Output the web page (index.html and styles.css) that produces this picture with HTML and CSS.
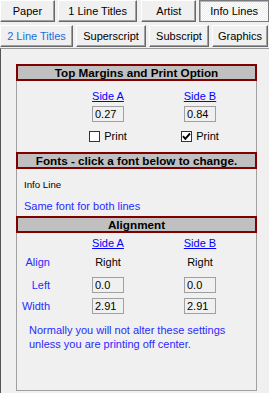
FILE: index.html
```html
<!DOCTYPE html>
<html lang="en">
<head>
  <meta charset="UTF-8" />
  <title>Info Lines</title>
  <link rel="stylesheet" href="styles.css">
</head>

<body>
  <!-- Pestañas -->
  <div class="tab-row">
    <button class="tab tab-paper">Paper</button>
    <button class="tab tab-one">1 Line Titles</button>
    <button class="tab tab-artist">Artist</button>
    <button class="tab tab-info active">Info Lines</button>
  </div>
  <div class="tab-row second">
    <button class="tab tab-two current">2 Line Titles</button>
    <button class="tab tab-super">Superscript</button>
    <button class="tab tab-sub">Subscript</button>
    <button class="tab tab-graphics">Graphics</button>
  </div>

  <!-- Contenido de la pestaña -->
  <div class="tab-page">
    <div class="panel">

      <!-- Margenes -->
      <div class="section-head">Top Margins and Print Option</div>
      <div class="row row-sides">
        <span></span>
        <a href="#" class="side-link">Side A</a>
        <a href="#" class="side-link">Side B</a>
      </div>
      <div class="row row-margins">
        <span></span>
        <input type="text" class="field" value="0.27">
        <input type="text" class="field" value="0.84">
      </div>
      <div class="row row-print">
        <span></span>
        <label class="print"><span class="check"></span>Print</label>
        <label class="print">
          <span class="check">
            <svg width="9" height="9" viewBox="0 0 9 9"><path d="M1 4.2 L3.3 6.8 L8 1.5" fill="none" stroke="#000" stroke-width="1.9"/></svg>
          </span>Print
        </label>
      </div>

      <!-- Fuentes -->
      <div class="section-head fonts-head">Fonts - click a font below to change.</div>
      <div class="font-name">Info Line</div>
      <div class="font-same">Same font for both lines</div>

      <!-- Alineación -->
      <div class="section-head align-head">Alignment</div>
      <div class="row row-sides2">
        <span></span>
        <a href="#" class="side-link">Side A</a>
        <a href="#" class="side-link">Side B</a>
      </div>
      <div class="row row-align">
        <span class="row-label">Align</span>
        <span>Right</span>
        <span>Right</span>
      </div>
      <div class="row row-left">
        <span class="row-label">Left</span>
        <input type="text" class="field" value="0.0">
        <input type="text" class="field" value="0.0">
      </div>
      <div class="row row-width">
        <span class="row-label">Width</span>
        <input type="text" class="field" value="2.91">
        <input type="text" class="field" value="2.91">
      </div>

      <p class="note">Normally you will not alter these settings<br>unless you are printing off center.</p>
    </div>
  </div>
</body>
</html>
```

FILE: styles.css
```css
body {
  margin: 0;
  padding: 0;
  font-family: 'Liberation Sans', Arial, sans-serif;
  font-size: 11px;
  background-color: #f0f0f0;
  color: #000000;
  width: 269px;
  height: 393px;
  overflow: hidden;
}

/* Pestañas */
.tab-row {
  display: flex;
  gap: 3px;
}

.tab-row.second {
  margin-top: 3px;
}

.tab {
  height: 22px;
  padding: 0;
  font-family: inherit;
  font-size: 11px;
  color: #000000;
  background-color: #f0f0f0;
  border: 1px solid;
  border-color: #ffffff #696969 #696969 #ffffff;
  box-shadow: inset -1px -1px 0 #a0a0a0;
}

.tab-paper { width: 55px; }
.tab-one { width: 80px; }
.tab-artist { width: 55px; margin-left: 1px; }
.tab-info { width: 70px; }

.tab-two { width: 73px; }
.tab-super { width: 70px; }
.tab-sub { width: 60px; }
.tab-graphics { width: 56px; }

.tab.active {
  border-color: #7a7a7a;
  box-shadow: inset 1px 1px 0 #b4b4b4;
  background: repeating-conic-gradient(#ffffff 0 25%, #ececec 0 50%) 0 0 / 2px 2px;
}

.tab.current {
  color: #1a6be0;
}

.tab-page {
  margin-top: 1px;
  border-top: 1px solid #9a9a9a;
  border-left: 1px solid #555555;
  padding: 15px 0 0 15px;
  height: 329px;
}

/* Panel */
.panel {
  width: 241px;
  box-sizing: border-box;
  border: 1px solid #a0a0a0;
  border-top: none;
  padding-bottom: 39px;
}

.section-head {
  margin: 0 -1px;
  height: 17px;
  box-sizing: border-box;
  border: 2px solid #800000;
  background-color: #c0c0c0;
  line-height: 13px;
  text-align: center;
  font-weight: bold;
  font-size: 11.7px;
}

.row {
  display: grid;
  grid-template-columns: 35px 72px 72px;
  column-gap: 20px;
  align-items: center;
  justify-items: center;
  line-height: 14px;
}

.row-label {
  justify-self: end;
  padding-right: 2px;
  color: #2a2aff;
}

.side-link {
  color: #0000ff;
  text-decoration: underline;
}

.field {
  width: 32px;
  height: 16px;
  box-sizing: border-box;
  margin: 0;
  padding: 0 2px;
  border: 1px solid #a0a0a0;
  background-color: #f0f0f0;
  font-family: inherit;
  font-size: 11px;
  color: #000000;
}

.print {
  display: flex;
  align-items: center;
}

.check {
  width: 11px;
  height: 11px;
  box-sizing: border-box;
  border: 1px solid #333333;
  background-color: #ffffff;
  margin-right: 4px;
  display: flex;
  align-items: center;
  justify-content: center;
}

.row-sides { margin-top: 8px; }
.row-margins { margin-top: 3px; }
.row-print { margin-top: 7px; }

.fonts-head { margin-top: 9px; }

.font-name {
  margin-top: 9px;
  padding-left: 7px;
  font-size: 9.7px;
  line-height: 14px;
}

.font-same {
  margin-top: 7px;
  padding-left: 7px;
  line-height: 14px;
  color: #2a2aff;
}

.align-head { margin-top: 3px; }

.row-sides2 { margin-top: 3px; }
.row-align { margin-top: 5px; }
.row-left { margin-top: 8px; }
.row-width { margin-top: 5px; }

.note {
  margin: 9px 0 0;
  padding-left: 12px;
  line-height: 14px;
  color: #2a2aff;
}
```
